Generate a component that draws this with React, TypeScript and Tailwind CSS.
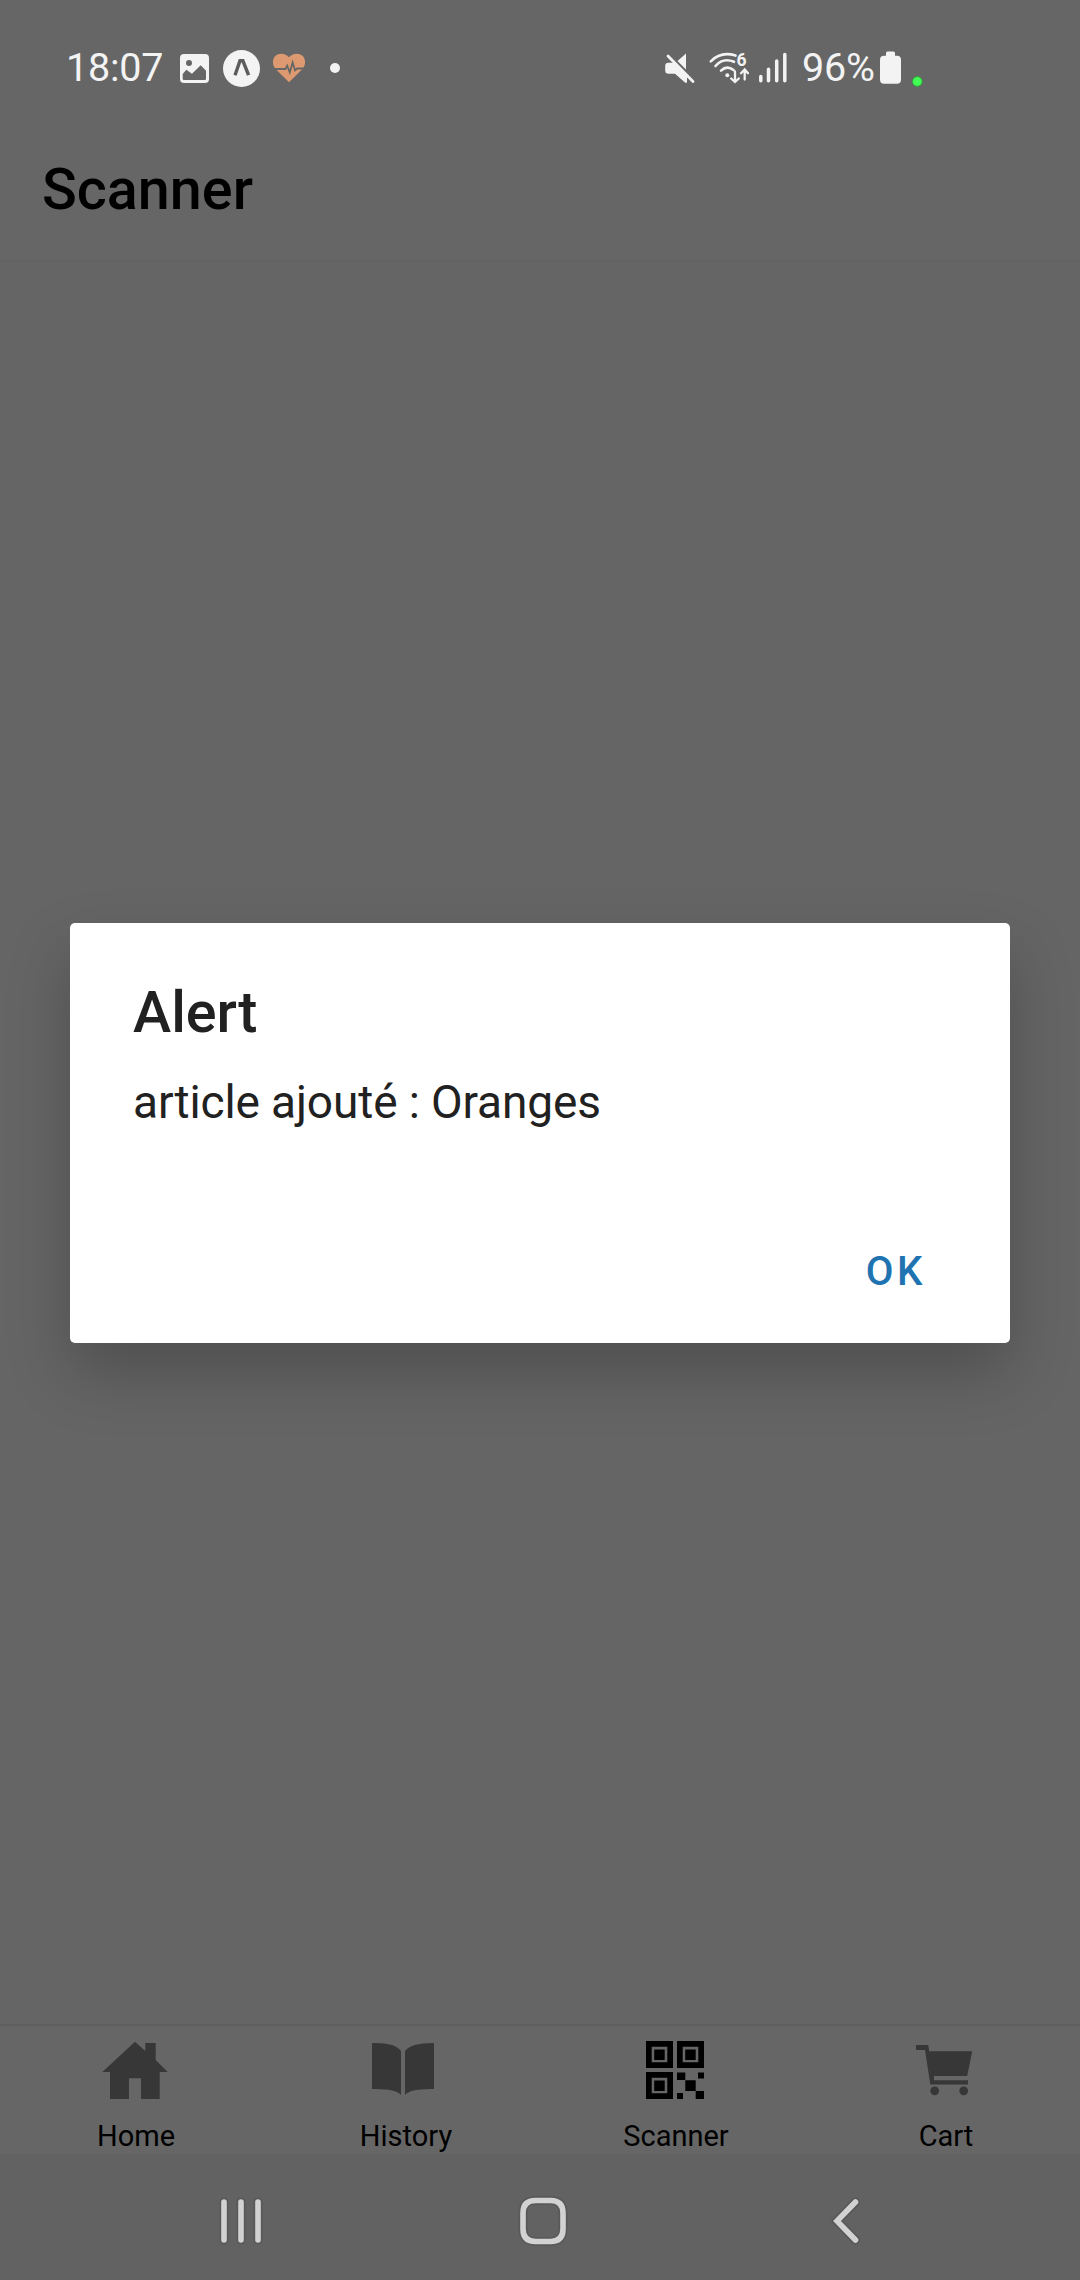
import type { ReactNode } from "react";

function StatusBar() {
  return (
    <div className="flex h-[134px] items-center pl-[66px] text-[39.5px] leading-none text-[#f3f3f3]">
      <span className="w-[98px] shrink-0 whitespace-nowrap pt-0.5 tracking-[-0.2px]">18:07</span>
      <svg className="ml-4 h-10 w-[29px] shrink-0" viewBox="0 0 29 40">
        <rect x="0" y="7" width="29" height="29" rx="4" fill="#f3f3f3" />
        <circle cx="9" cy="16" r="3" fill="#666" />
        <path d="M2.7 27 6.3 22.7 12 26.7 20.7 18.3 26 23.7V31.7Q26 32.9 24.8 32.9H3.9Q2.7 32.9 2.7 31.7Z" fill="#666" />
      </svg>
      <svg className="ml-3.5 h-10 w-[37px] shrink-0" viewBox="0 0 37 40">
        <circle cx="18.5" cy="21.5" r="18.5" fill="#f3f3f3" />
        <path d="M12 28.2 17 13.8H19.9L25.6 28.2" fill="none" stroke="#5c5c5c" strokeWidth="3.4" />
      </svg>
      <svg className="ml-[13px] h-10 w-8 shrink-0" viewBox="0 0 32 40">
        <path d="M16 35.2 2.8 22.2C-1 18.2-.8 12.2 2.3 9 6 5.4 12.5 6 16 10.3 19.5 6 26 5.4 29.7 9 32.8 12.2 33 18.2 29.2 22.2Z" fill="#dd9a71" />
        <path d="M2 22H12.5L14.2 18.7 16.8 25.5 19.6 15.5 22 23.3 24 21.5H31" fill="none" stroke="#666" strokeWidth="1.8" />
      </svg>
      <span className="ml-[25px] mt-0.5 size-2.5 shrink-0 rounded-full bg-[#f3f3f3]" />

      <svg className="ml-[325px] h-10 w-[30px] shrink-0" viewBox="0 0 30 40" fill="#f3f3f3">
        <path d="M21 6.500V22.500L12.500 14Z" />
        <path d="M3.500 15.800H10L22 28V35Q21.500 36.500 20 35.500L10 26.800H3.500Q.2 26.800.2 23.500V19Q.2 15.800 3.500 15.800Z" />
        <path d="M3 9 28 34.500" stroke="#f3f3f3" strokeWidth="2.800" strokeLinecap="round" />
      </svg>
      <svg className="ml-3.5 h-10 w-10 shrink-0" viewBox="0 0 40 40" fill="none" stroke="#f3f3f3" strokeLinecap="round">
        <path d="M1.800 14.300Q12 4 26.500 8.600" strokeWidth="2.600" />
        <path d="M6.500 19Q14 10.200 25 14.800" strokeWidth="2.600" />
        <path d="M12 23.600Q18 17.800 24.500 23" strokeWidth="2.600" />
        <circle cx="18.300" cy="28.300" r="2" fill="#f3f3f3" stroke="none" />
        <path d="M26 24.500V34.800M22.200 31.500 26 35 29.800 31.500M35.700 32.500V22.800M32 26.200 35.700 22.500 39 26.200" strokeWidth="2.300" />
        <text x="27.600" y="19.300" fontSize="17.500" fontWeight="700" fill="#f3f3f3" stroke="none">6</text>
      </svg>
      <svg className="ml-2.5 h-10 w-7 shrink-0" viewBox="0 0 28 40" stroke="#f3f3f3" strokeWidth="3.500" strokeLinecap="round">
        <path d="M1.800 29.500V33.700M9.500 22.300V33.700M17.700 14V33.700M25.800 7.400V33.700" />
      </svg>
      <span className="ml-[15px] w-[73px] shrink-0 whitespace-nowrap pt-0.5 tracking-[-0.2px]">96%</span>
      <svg className="ml-[5px] h-10 w-[21px] shrink-0" viewBox="0 0 21 40" fill="#f3f3f3">
        <rect x="6" y="4.500" width="9" height="8" rx="1.500" />
        <rect x="0" y="8.800" width="21" height="28" rx="4" />
      </svg>
      <svg className="ml-2.5 h-10 w-3 shrink-0" viewBox="0 0 12 40">
        <circle cx="6.300" cy="34.500" r="4.900" fill="#42fb55" stroke="#2b9c35" strokeWidth="0.900" />
      </svg>
    </div>
  );
}

function Tab({ label, color, children }: { label: string; color: string; children: ReactNode }) {
  return (
    <div className="flex flex-1 flex-col items-center">
      <svg className={`h-[92px] w-20 ${color}`} viewBox="0 0 80 92" fill="currentColor">
        {children}
      </svg>
      <span className="pl-0.5 text-[29px] leading-9 text-black">{label}</span>
    </div>
  );
}

function Finder({ x, y }: { x: number; y: number }) {
  return (
    <>
      <path
        fillRule="evenodd"
        d={`M${x} ${y}h27v27h-27ZM${x + 5.7} ${y + 5.8}v15.500h15.600v-15.500Z`}
      />
      <rect x={x + 8.2} y={y + 8.5} width="10.500" height="10.500" />
    </>
  );
}

function TabBar() {
  return (
    <div className="flex h-[130px] border-t-2 border-[#5e5e5e] bg-[#666]">
      <Tab label="Home" color="text-[#373737]">
        <path d="M40 15.700 7.300 46H15V73H34V52.300H46V73H64.700V46H72.700L60.700 34V17H50.300V25Z" />
      </Tab>
      <Tab label="History" color="text-[#373737]">
        <path d="M7 17Q31 16.500 36 25.300V69Q31 62.500 7 63Z" />
        <path d="M69 17Q45 17 40 25.300V69Q45 62.500 69 63Z" />
      </Tab>
      <Tab label="Scanner" color="text-black">
        <Finder x={11} y={15} />
        <Finder x={42} y={15} />
        <Finder x={11} y={46} />
        <path d="M42 46.500h8.300V54H42ZM63 46.500h6v6h-6ZM50.300 54.300h10.400V65H50.300ZM42 67h6v6h-6ZM60.700 65H69v8h-8.300Z" />
      </Tab>
      <Tab label="Cart" color="text-[#373737]">
        <path d="M11 19H23.200L24.200 25.300H67.200L62.200 50H29V54.300H63V58.600H25.300L20 24H11Z" />
        <circle cx="29.700" cy="64.800" r="4.400" />
        <circle cx="58.700" cy="64.800" r="4.400" />
      </Tab>
    </div>
  );
}

function NavKey({ d }: { d: string }) {
  return (
    <svg className="size-16" viewBox="0 0 64 64" fill="none" strokeLinecap="round">
      <path d={d} stroke="#595959" strokeWidth="9" />
      <path d={d} stroke="#d2d2d2" strokeWidth="5.600" />
    </svg>
  );
}

function SystemNav() {
  return (
    <div className="h-[126px] bg-[#626262]">
      <div className="ml-[90px] grid h-full w-[907px] grid-cols-3 place-items-center pt-[7px]">
        <NavKey d="M15 13V51M32 13V51M49 13V51" />
        <NavKey d="M24.500 11.500H39.500Q52 11.500 52 24V40Q52 52.500 39.500 52.500H24.500Q12 52.500 12 40V24Q12 11.500 24.500 11.500Z" />
        <NavKey d="M41.500 13 23 32 41.500 51" />
      </div>
    </div>
  );
}

function AlertDialog() {
  return (
    <div className="absolute inset-0 flex items-start justify-center pt-[923px]">
      <div
        role="alertdialog"
        className="flex h-[420px] w-[940px] flex-col rounded-[5px] bg-white pb-[19px] pl-[63px] pr-[60px] pt-14 text-[#212121] shadow-[0_30px_64px_rgba(0,0,0,0.22)]"
      >
        <h2 className="text-[57.5px] font-medium leading-[68px]">Alert</h2>
        <p className="mt-7 text-[46px] leading-[54px] tracking-[-0.12px]">article ajouté : Oranges</p>
        <button className="ml-auto mt-auto h-[104px] px-6 text-[40.25px] font-medium tracking-[3.5px] text-[#2073b1]">
          OK
        </button>
      </div>
    </div>
  );
}

export default function App() {
  return (
    <div className="relative flex h-[2280px] w-[1080px] flex-col overflow-hidden bg-[#666] font-['Roboto',sans-serif]">
      <StatusBar />
      <header className="flex h-[128px] items-center border-b-2 border-[#636363] pb-[15px] pl-[42px]">
        <h1 className="text-[57.5px] font-medium leading-none text-black">Scanner</h1>
      </header>
      <main className="flex-1 bg-[#656565]" />
      <TabBar />
      <SystemNav />
      <AlertDialog />
    </div>
  );
}
